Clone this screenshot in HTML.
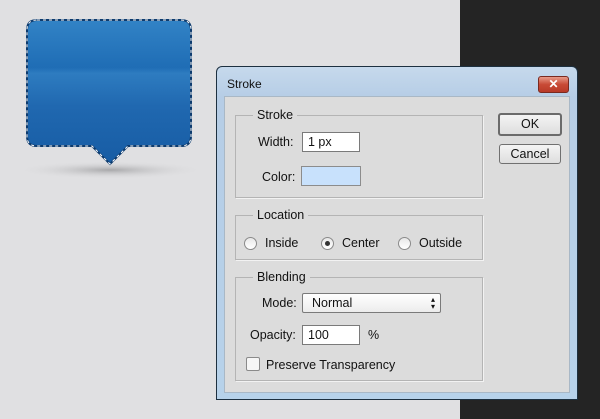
<!DOCTYPE html>
<html><head><style>
*{margin:0;padding:0;box-sizing:border-box}
body{width:600px;height:419px;background:#e0e0e2;position:relative;overflow:hidden;font-family:"Liberation Sans",sans-serif;font-size:12px;color:#111}
.a{position:absolute}
.dark{left:460px;top:0;width:140px;height:419px;background:#242424}
.dlg{left:216px;top:66px;width:362px;height:334px;border:1px solid #1d3040;border-radius:6px 6px 0 0;background:linear-gradient(#c6d9ec,#b6cde6 30px,#b7d2ea);}
.client{left:7px;top:29px;width:346px;height:297px;background:#dcdcdc;border:1px solid #a9b8c6}
.fs{position:absolute;border:1px solid #b4b4b4;box-shadow:1px 1px 0 #f2f2f2}
.lg{position:absolute;background:#dcdcdc;padding:0 4px;top:-8px;left:17px;font-size:12.5px}
.inp{position:absolute;background:#fff;border:1px solid #7a7a7a;padding:2px 5px;font-size:12.5px;height:20px}
.lbl{position:absolute;font-size:12.5px}
.rad{position:absolute;width:13px;height:13px;border-radius:50%;border:1px solid #8a8a8a;background:linear-gradient(#e8e8e8,#fff)}
.btn{position:absolute;border:1px solid #707070;border-radius:3px;background:linear-gradient(#f4f4f4,#dedede);text-align:center;font-size:12.5px;line-height:19px}
</style></head><body>
<div class="a dark"></div>
<svg class="a" style="left:0;top:0" width="220" height="200">
<defs><linearGradient id="g" x1="0" y1="0" x2="0" y2="1"><stop offset="0" stop-color="#3283c6"/><stop offset="0.33" stop-color="#1f6db5"/><stop offset="0.37" stop-color="#2e7cc0"/><stop offset="0.6" stop-color="#2068b0"/><stop offset="1" stop-color="#175ca4"/></linearGradient>
<radialGradient id="s"><stop offset="0" stop-color="#a8a8aa"/><stop offset="1" stop-color="#e0e0e2" stop-opacity="0"/></radialGradient></defs>
<ellipse cx="110" cy="170" rx="95" ry="9" fill="url(#s)"/>
<path d="M37 20H181Q191 20 191 30V136Q191 146 181 146H128L110 164L92 146H37Q27 146 27 136V30Q27 20 37 20Z" fill="url(#g)" stroke="#0d3b6e" stroke-width="2"/>
<path d="M37 20H181Q191 20 191 30V136Q191 146 181 146H128L110 164L92 146H37Q27 146 27 136V30Q27 20 37 20Z" fill="none" stroke="#fff" stroke-dasharray="3 3" stroke-width="1"/>
</svg>
<div class="a dlg">
<div class="a" style="left:10px;top:10px;font-size:12px">Stroke</div>
<div class="a" style="left:321px;top:9px;width:31px;height:17px;border:1px solid #7a2a20;border-radius:3px;background:linear-gradient(#e89a88,#c84a36 50%,#b83a28);color:#fff;text-align:center;font-weight:bold;font-size:12px;line-height:15px">✕</div>
<div class="a client">
<div class="fs" style="left:10px;top:18px;width:248px;height:83px"><div class="lg">Stroke</div></div>
<div class="lbl" style="left:33px;top:38px">Width:</div>
<div class="inp" style="left:77px;top:35px;width:58px">1 px</div>
<div class="lbl" style="left:37px;top:73px">Color:</div>
<div class="inp" style="left:76px;top:69px;width:60px;background:#c8e1fc;border-color:#8c8c8c"></div>
<div class="fs" style="left:10px;top:118px;width:248px;height:45px"><div class="lg">Location</div></div>
<div class="rad" style="left:19px;top:140px"></div><div class="lbl" style="left:40px;top:139px">Inside</div>
<div class="rad" style="left:96px;top:140px"><div style="position:absolute;left:3px;top:3px;width:5px;height:5px;border-radius:50%;background:#333"></div></div><div class="lbl" style="left:117px;top:139px">Center</div>
<div class="rad" style="left:173px;top:140px"></div><div class="lbl" style="left:194px;top:139px">Outside</div>
<div class="fs" style="left:10px;top:180px;width:248px;height:104px"><div class="lg">Blending</div></div>
<div class="lbl" style="left:37px;top:199px">Mode:</div>
<div class="inp" style="left:77px;top:196px;width:139px;border-radius:2px;background:linear-gradient(#fff,#ececec);padding-left:9px">Normal<span style="position:absolute;right:5px;top:2px;font-size:8px;line-height:7px">▴<br>▾</span></div>
<div class="lbl" style="left:25px;top:231px">Opacity:</div>
<div class="inp" style="left:77px;top:228px;width:58px">100</div>
<div class="lbl" style="left:143px;top:231px">%</div>
<div class="a" style="left:21px;top:260px;width:14px;height:14px;border:1px solid #8a8a8a;border-radius:2px;background:#f6f6f6"></div>
<div class="lbl" style="left:41px;top:261px">Preserve Transparency</div>
<div class="btn" style="left:273px;top:16px;width:64px;height:23px;border:2px solid #6b6b6b">OK</div>
<div class="btn" style="left:274px;top:47px;width:62px;height:20px">Cancel</div>
</div>
</div>
</body></html>
